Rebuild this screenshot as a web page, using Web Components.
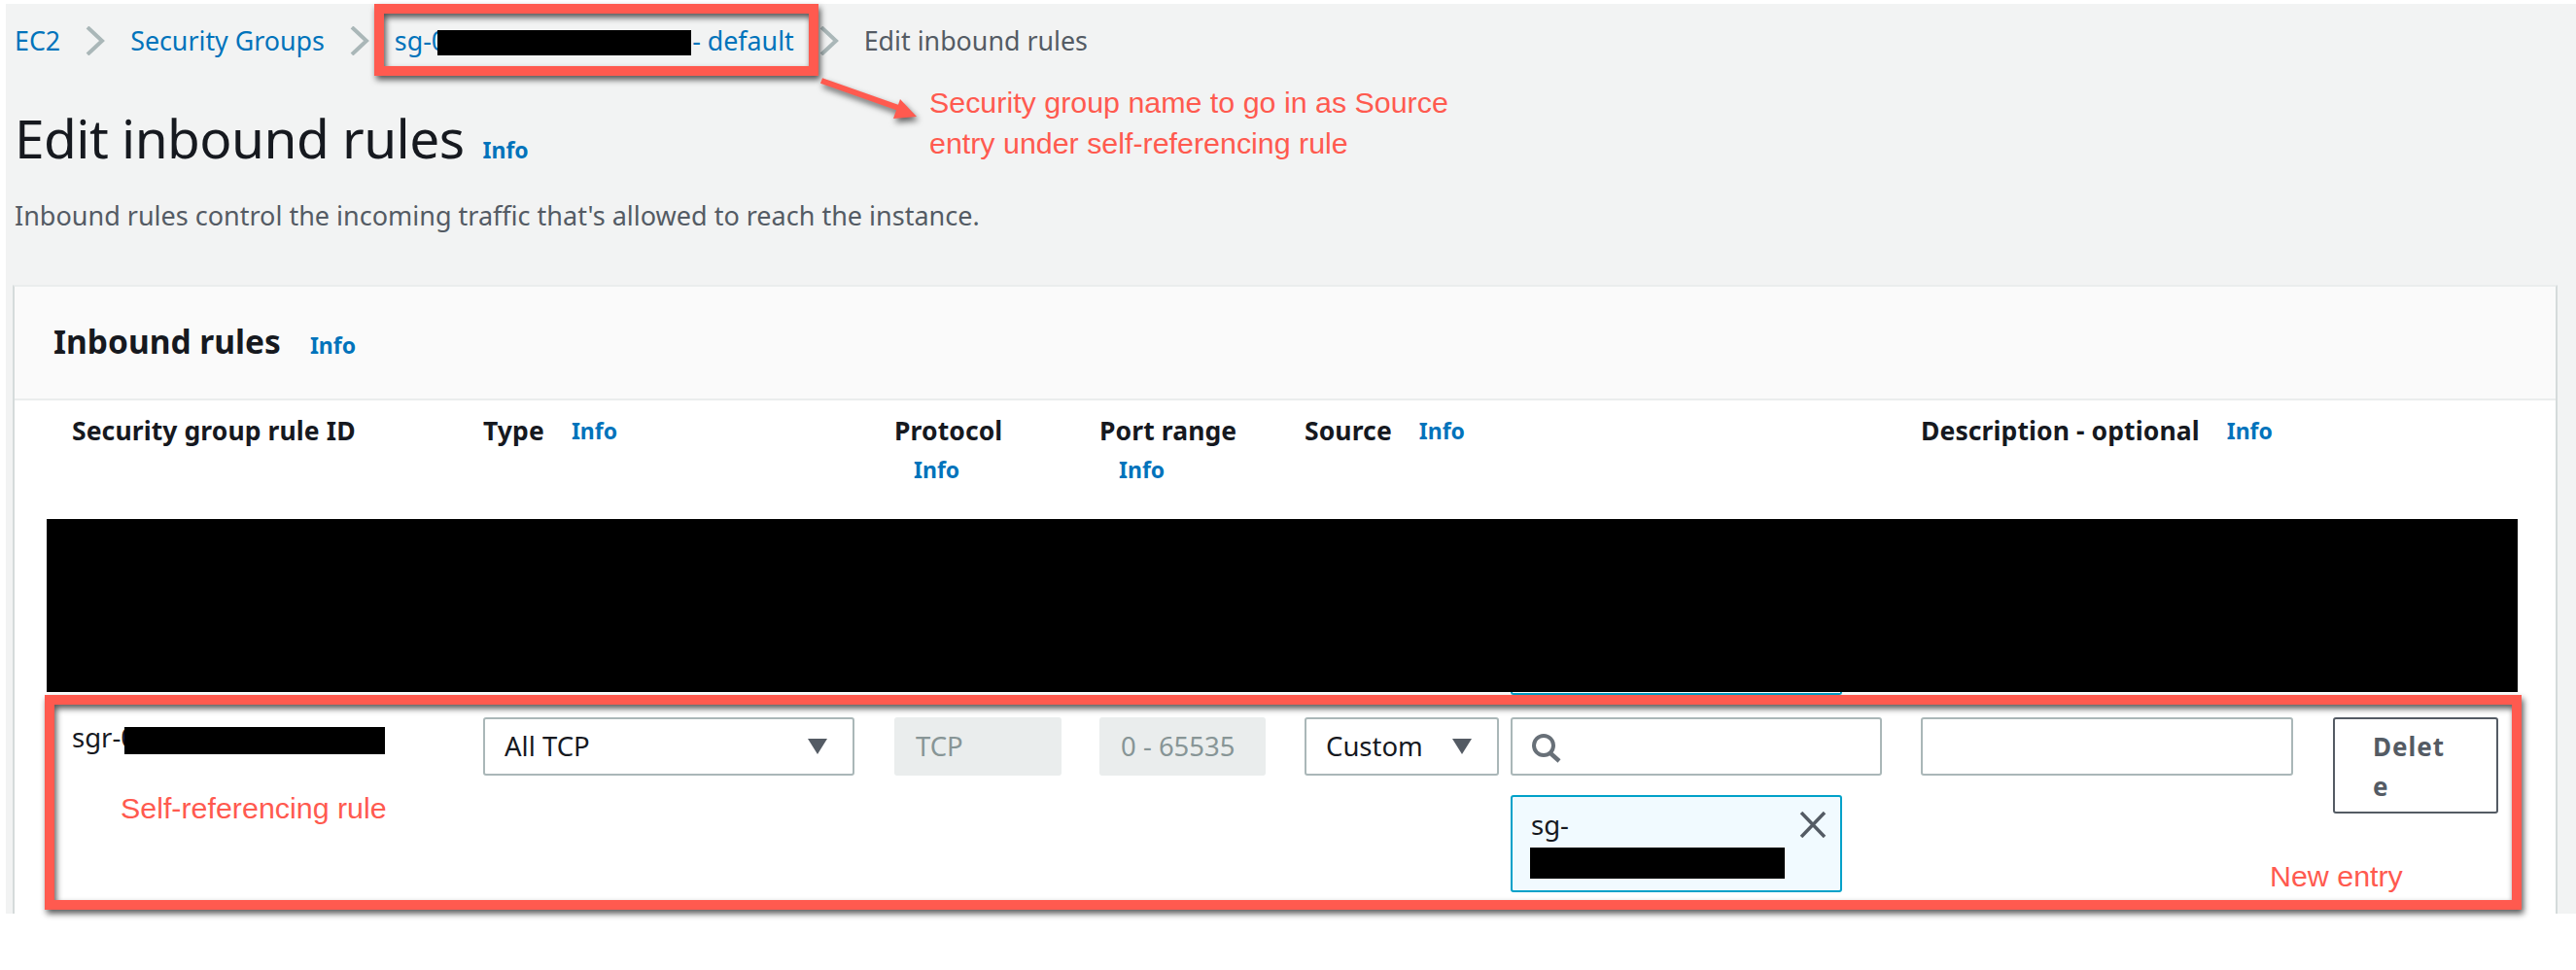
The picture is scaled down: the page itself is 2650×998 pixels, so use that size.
<!DOCTYPE html>
<html>
<head>
<meta charset="utf-8">
<title>Edit inbound rules</title>
<style>
    html, body { margin: 0; background: #fff; }
    body { width: 2650px; height: 998px; overflow: hidden; font-family: "Noto Sans", sans-serif; color: #16191f; }
    .stage { position: relative; width: 2650px; height: 998px; }
    #crumb-frame { left: 385px; top: 4px; width: 457px; height: 74px; }
    #row-frame { left: 46px; top: 715px; width: 2548px; height: 221px; }
    #crumb-arrow { left: 840px; top: 78px; }
    #note-source { left: 956px; top: 84px; }
    #note-self { left: 124px; top: 810px; }
    #note-new { left: 2335px; top: 880px; }
</style>
</head>
<body>
<div class="stage">
    <aws-page>
        <aws-breadcrumb slot="crumbs">
            <a-link>EC2</a-link>
            <bread-sep></bread-sep>
            <a-link>Security Groups</a-link>
            <bread-sep></bread-sep>
            <a-link>sg-0<redact-bar style="width:261px;height:26px;margin:0 1px 0 -9px;vertical-align:-5px"></redact-bar>- default</a-link>
            <bread-sep></bread-sep>
            <span style="color:#545b64">Edit inbound rules</span>
        </aws-breadcrumb>
        <page-title slot="title" text="Edit inbound rules"></page-title>
        <page-desc slot="desc">Inbound rules control the incoming traffic that's allowed to reach the instance.</page-desc>
        <rules-card slot="card" text="Inbound rules">
            <rule-head slot="head">
                <col-head text="Security group rule ID" plain></col-head>
                <col-head text="Type"></col-head>
                <col-head text="Protocol" narrow></col-head>
                <col-head text="Port range" narrow></col-head>
                <col-head text="Source"></col-head>
                <span></span>
                <col-head text="Description - optional"></col-head>
                <span></span>
            </rule-head>
            <redact-bar slot="hidden-row" style="display:block;width:2542px;height:178px;margin-left:33px"></redact-bar>
            <rule-row slot="row">
                <id-cell>sgr-0<redact-bar style="width:268px;height:28px;margin-left:-12px;vertical-align:-7px"></redact-bar></id-cell>
                <select-box text="All TCP" style="width:382px"></select-box>
                <field-box disabled style="width:172px">TCP</field-box>
                <field-box disabled style="width:171px">0 - 65535</field-box>
                <select-box text="Custom" style="width:200px"></select-box>
                <source-cell>
                    <search-box></search-box>
                    <sg-token>sg-</sg-token>
                </source-cell>
                <field-box style="width:383px"></field-box>
                <delete-button>Delete</delete-button>
            </rule-row>
        </rules-card>
    </aws-page>

    <note-frame id="crumb-frame"></note-frame>
    <note-frame id="row-frame"></note-frame>
    <note-arrow id="crumb-arrow"></note-arrow>
    <note-text id="note-source">Security group name to go in as Source<br>entry under self-referencing rule</note-text>
    <note-text id="note-self">Self-referencing rule</note-text>
    <note-text id="note-new">New entry</note-text>
</div>

<script>
(function() {
    'use strict';

    const INFO_BLUE = '#0073bb';

    // small helper, every element here is just a styled shadow root
    function define(name, html, attrs) {
        customElements.define(name, class extends HTMLElement {
            constructor() {
                super();
                let out = html;
                for (const a of attrs || []) {
                    out = out.split('{{' + a + '}}').join(this.getAttribute(a) || '');
                }
                this.attachShadow({mode: 'open'}).innerHTML = out;
            }
        });
    }

    define('aws-page', `
        <style>
            :host {
                display: flex;
                flex-direction: column;
                position: relative;
                top: 4px;
                margin-left: 6px;
                width: 2644px;
                height: 936px;
                overflow: hidden;
                background: #f2f3f3;
            }
        </style>
        <slot name="crumbs"></slot>
        <slot name="title"></slot>
        <slot name="desc"></slot>
        <slot name="card"></slot>
    `);

    define('aws-breadcrumb', `
        <style>
            :host {
                display: flex;
                align-items: center;
                gap: 26px;
                height: 36px;
                padding: 20px 0 0 9px;
                font-size: 26.8px;
                line-height: 36px;
                white-space: nowrap;
            }
        </style>
        <slot></slot>
    `);

    define('a-link', `
        <style>:host { display: inline-block; color: ${INFO_BLUE}; }</style>
        <slot></slot>
    `);

    define('bread-sep', `
        <style>:host { display: block; width: 20px; height: 30px; }</style>
        <svg width="20" height="30" viewBox="0 0 20 30">
            <path d="M2 1 L17 15 L2 29" fill="none" stroke="#aab7b8" stroke-width="4"/>
        </svg>
    `);

    define('redact-bar', `
        <style>:host { display: inline-block; background: #000; position: relative; }</style>
    `);

    define('info-link', `
        <style>
            :host {
                display: inline-block;
                color: ${INFO_BLUE};
                font-size: 23px;
                font-weight: 700;
            }
        </style>
        <slot>Info</slot>
    `);

    define('page-title', `
        <style>
            :host {
                display: flex;
                align-items: baseline;
                gap: 19px;
                height: 70px;
                margin: 47px 0 0 9px;
                font-size: 55px;
                line-height: 70px;
                letter-spacing: -.55px;
                color: #16191f;
            }
            info-link { letter-spacing: 0; }
        </style>
        <span>{{text}}</span><info-link></info-link>
    `, ['text']);

    define('page-desc', `
        <style>
            :host {
                display: block;
                margin: 27px 0 0 9px;
                font-size: 27px;
                line-height: 36px;
                color: #545b64;
            }
        </style>
        <slot></slot>
    `);

    define('rules-card', `
        <style>
            :host {
                display: block;
                box-sizing: border-box;
                margin: 53px 0 0 7px;
                width: 2618px;
                height: 660px;
                background: #fff;
                border: solid #d5dbdb;
                border-width: 2px 2px 0 2px;
                border-top-color: #eaeded;
            }
            .header {
                display: flex;
                align-items: baseline;
                gap: 30px;
                box-sizing: border-box;
                height: 117px;
                padding: 34px 0 0 40px;
                background: #fafafa;
                border-bottom: 2px solid #eaeded;
                font-size: 33.5px;
                line-height: 44px;
                font-weight: 700;
                white-space: nowrap;
            }
        </style>
        <div class="header"><span>{{text}}</span><info-link></info-link></div>
        <slot name="head"></slot>
        <slot name="hidden-row"></slot>
        <slot name="row"></slot>
    `, ['text']);

    const COLUMNS = 'grid-template-columns: 423px 423px 211px 211px 212px 422px 424px 170px;';

    define('rule-head', `
        <style>
            :host {
                display: grid;
                ${COLUMNS}
                box-sizing: border-box;
                height: 122px;
                padding: 11px 0 0 59px;
            }
        </style>
        <slot></slot>
    `);

    define('col-head', `
        <style>
            :host {
                display: flex;
                flex-wrap: wrap;
                align-content: flex-start;
                font-size: 26.5px;
                font-weight: 700;
                line-height: 40px;
            }
            :host([narrow]) { max-width: 170px; }
            span { margin-right: 8px; white-space: nowrap; letter-spacing: .1px; }
            info-link { margin-left: 20px; }
            :host([plain]) info-link { display: none; }
        </style>
        <span>{{text}}</span><info-link></info-link>
    `, ['text']);

    define('rule-row', `
        <style>
            :host {
                display: grid;
                ${COLUMNS}
                align-items: start;
                box-sizing: border-box;
                padding: 26px 0 0 59px;
                font-size: 27.5px;
            }
        </style>
        <slot></slot>
    `);

    define('id-cell', `
        <style>:host { display: block; line-height: 40px; padding-top: 1px; white-space: nowrap; }</style>
        <slot></slot>
    `);

    define('select-box', `
        <style>
            :host {
                display: flex;
                align-items: center;
                justify-content: space-between;
                box-sizing: border-box;
                height: 60px;
                padding: 0 26px 0 20px;
                background: #fff;
                border: 2px solid #aab7b8;
                border-radius: 3px;
                line-height: 36px;
            }
            svg { display: block; }
        </style>
        <span>{{text}}</span>
        <svg width="20" height="16" viewBox="0 0 20 16"><path d="M0 0 H20 L10 16 Z" fill="#545b64"/></svg>
    `, ['text']);

    define('field-box', `
        <style>
            :host {
                display: flex;
                align-items: center;
                box-sizing: border-box;
                height: 60px;
                padding: 0 20px;
                background: #fff;
                border: 2px solid #aab7b8;
                border-radius: 3px;
                line-height: 36px;
            }
            :host([disabled]) {
                background: #eaeded;
                border-color: #eaeded;
                color: #879596;
            }
        </style>
        <slot></slot>
    `);

    define('source-cell', `
        <style>
            :host { display: flex; flex-direction: column; gap: 20px; position: relative; }
            /* bottom of the token belonging to the hidden row above */
            .tail {
                position: absolute;
                left: 0;
                top: -26px;
                box-sizing: border-box;
                width: 341px;
                height: 3px;
                background: #fff;
                border: 2px solid #00a1c9;
                border-top: 0;
                border-radius: 0 0 3px 3px;
            }
        </style>
        <div class="tail"></div>
        <slot></slot>
    `);

    define('search-box', `
        <style>
            :host {
                display: flex;
                align-items: center;
                box-sizing: border-box;
                width: 382px;
                height: 60px;
                padding: 4px 0 0 19px;
                background: #fff;
                border: 2px solid #aab7b8;
                border-radius: 3px;
            }
        </style>
        <svg width="32" height="30" viewBox="0 0 32 30">
            <circle cx="13" cy="12" r="10" fill="none" stroke="#687078" stroke-width="4"/>
            <path d="M20 20 L29 28" fill="none" stroke="#687078" stroke-width="4.5"/>
        </svg>
    `);

    define('sg-token', `
        <style>
            :host {
                display: flex;
                justify-content: space-between;
                box-sizing: border-box;
                width: 341px;
                height: 100px;
                padding: 11px 14px 0 19px;
                background: #f1faff;
                border: 2px solid #00a1c9;
                border-radius: 3px;
                line-height: 36px;
            }
            .name { display: flex; flex-direction: column; gap: 5px; }
            .bar { width: 262px; height: 32px; background: #000; margin-left: -1px; }
            svg { display: block; margin-top: 4px; }
        </style>
        <div class="name"><span><slot></slot></span><div class="bar"></div></div>
        <svg width="28" height="27" viewBox="0 0 28 27">
            <path d="M2 1 L26 26 M26 1 L2 26" fill="none" stroke="#545b64" stroke-width="3.5"/>
        </svg>
    `);

    define('delete-button', `
        <style>
            :host {
                display: block;
                box-sizing: border-box;
                width: 170px;
                height: 99px;
                padding: 8px 39px 0 39px;
                border: 2px solid #545b64;
                border-radius: 3px;
                color: #545b64;
                font-size: 26px;
                font-weight: 700;
                line-height: 41px;
                letter-spacing: 1px;
                word-break: break-all;
            }
        </style>
        <slot></slot>
    `);

    // annotations pasted on top of the screenshot
    define('note-frame', `
        <style>
            :host {
                display: block;
                position: absolute;
                box-sizing: border-box;
                border: 10px solid #ff5a4f;
                filter: drop-shadow(2px 4px 3px rgba(0,0,0,.65));
            }
        </style>
    `);

    define('note-text', `
        <style>
            :host {
                display: block;
                position: absolute;
                font-family: "Liberation Sans", Arial, sans-serif;
                font-size: 30.4px;
                line-height: 42px;
                color: #ff5a4f;
                white-space: nowrap;
            }
        </style>
        <slot></slot>
    `);

    define('note-arrow', `
        <style>
            :host {
                display: block;
                position: absolute;
                width: 120px;
                height: 60px;
                filter: drop-shadow(2px 4px 3px rgba(0,0,0,.6));
            }
            svg { display: block; }
        </style>
        <svg width="120" height="60" viewBox="0 0 120 60">
            <path d="M5 5 L90 35" fill="none" stroke="#ff5a4f" stroke-width="6"/>
            <path d="M103 42 L79 44 L86 24 Z" fill="#ff5a4f"/>
        </svg>
    `);
})();
</script>
</body>
</html>
